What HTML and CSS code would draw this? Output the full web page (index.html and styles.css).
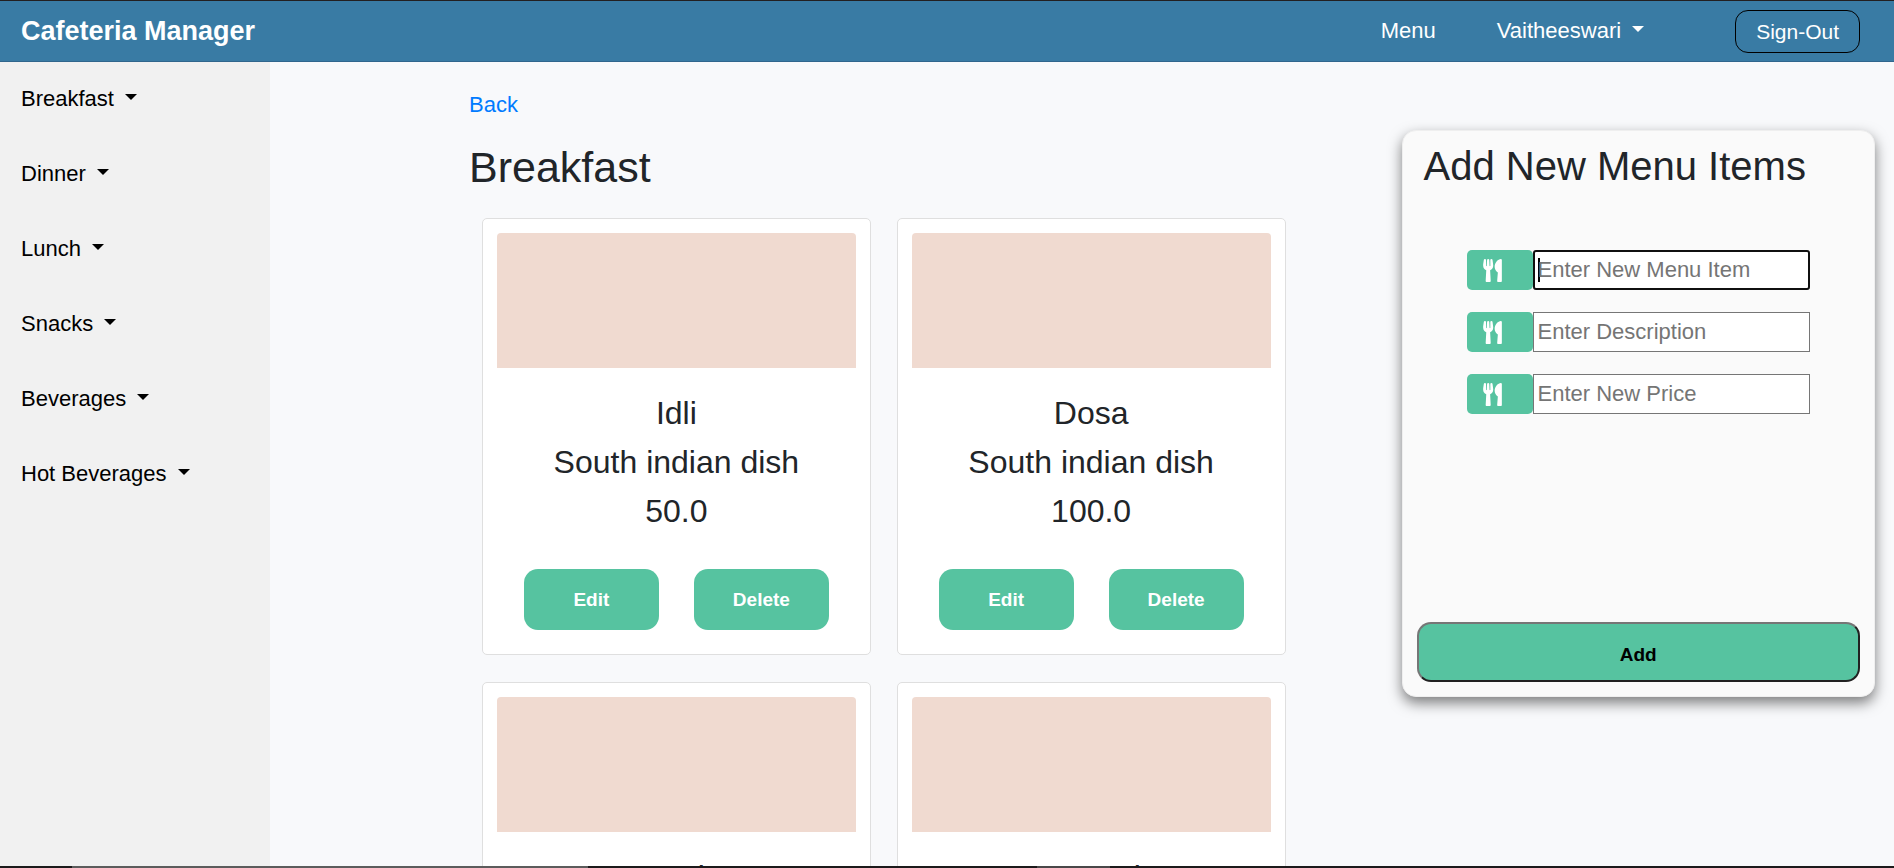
FILE: index.html
```html
<!DOCTYPE html>
<html lang="en">
<head>
<meta charset="utf-8">
<meta name="viewport" content="width=device-width, initial-scale=1">
<title>Cafeteria Manager</title>
<link rel="stylesheet" href="styles.css">
</head>
<body>
<svg class="sprite" aria-hidden="true">
  <symbol id="utensils" viewBox="0 0 416 512">
    <path d="M207.900 15.200c.8 4.700 16.100 94.500 16.100 128.800 0 52.300-27.800 89.600-68.900 104.600L168 486.700c.7 13.700-10.200 25.300-24 25.300H80c-13.700 0-24.700-11.500-24-25.300l12.900-238.100C27.700 233.600 0 196.200 0 144 0 109.600 15.300 19.900 16.100 15.200 19.300-5.100 61.400-5.400 64 16.300v141.200c1.300 3.400 15.100 3.200 16 0 1.400-25.300 7.900-139.200 8-141.800 3.300-20.800 44.700-20.800 47.900 0 .2 2.700 6.600 116.500 8 141.800.9 3.200 14.800 3.400 16 0V16.300c2.600-21.600 44.800-21.400 48-1.100zm119.200 285.700l-15 185.100c-1.200 14 9.900 26 23.900 26h56c13.300 0 24-10.700 24-24V24c0-13.200-10.700-24-24-24-82.500 0-221.400 178.500-64.900 300.900z"/>
  </symbol>
</svg>
<header class="topbar">
  <a class="brand" href="#">Cafeteria Manager</a>
  <nav class="topnav">
    <a class="toplink" href="#">Menu</a>
    <button class="toplink caret" type="button">Vaitheeswari</button>
    <button class="signout" type="button">Sign-Out</button>
  </nav>
</header>
<div class="page">
  <nav class="sidebar">
    <button class="category caret" type="button">Breakfast</button>
    <button class="category caret" type="button">Dinner</button>
    <button class="category caret" type="button">Lunch</button>
    <button class="category caret" type="button">Snacks</button>
    <button class="category caret" type="button">Beverages</button>
    <button class="category caret" type="button">Hot Beverages</button>
  </nav>
  <main class="content">
    <a class="back" href="#">Back</a>
    <h2 class="heading">Breakfast</h2>
    <div class="cards">
      <article class="card">
        <div class="photo"></div>
        <div class="details"><p>Idli</p><p>South indian dish</p><p>50.0</p></div>
        <div class="actions"><button class="action" type="button">Edit</button><button class="action" type="button">Delete</button></div>
      </article>
      <article class="card">
        <div class="photo"></div>
        <div class="details"><p>Dosa</p><p>South indian dish</p><p>100.0</p></div>
        <div class="actions"><button class="action" type="button">Edit</button><button class="action" type="button">Delete</button></div>
      </article>
      <article class="card">
        <div class="photo"></div>
        <div class="details"><p>Puri</p></div>
      </article>
      <article class="card">
        <div class="photo"></div>
        <div class="details"><p>Pongal</p></div>
      </article>
    </div>
  </main>
  <form class="panel">
    <h3 class="panel-title">Add New Menu Items</h3>
    <div class="fields">
      <div class="field">
        <label class="tag" for="item" aria-label="Menu item"><svg class="icon"><use href="#utensils"/></svg></label>
        <input class="input input-active" id="item" type="text" placeholder="Enter New Menu Item">
      </div>
      <div class="field">
        <label class="tag" for="description" aria-label="Description"><svg class="icon"><use href="#utensils"/></svg></label>
        <input class="input" id="description" type="text" placeholder="Enter Description">
      </div>
      <div class="field">
        <label class="tag" for="price" aria-label="Price"><svg class="icon"><use href="#utensils"/></svg></label>
        <input class="input" id="price" type="text" placeholder="Enter New Price">
      </div>
    </div>
    <button class="add" type="button">Add</button>
  </form>
</div>
<div class="edge"></div>
</body>
</html>
```
FILE: styles.css
```css
* { box-sizing: border-box; }

body {
  margin: 0;
  height: 100vh;
  overflow: hidden;
  display: flex;
  flex-direction: column;
  background: #f8f9fb;
  color: #212529;
  font-family: "Liberation Sans", Arial, sans-serif;
  font-size: 22px;
  line-height: 32px;
}

h2, h3, p { margin: 0; font-weight: 400; }
a { text-decoration: none; }
button, input { font: inherit; }

.sprite { display: none; }

.topbar {
  flex: none;
  display: flex;
  justify-content: space-between;
  align-items: center;
  height: 62px;
  padding: 0 34px 0 21px;
  background: #397ba4;
  border-top: 1px solid #231f20;
  border-bottom: 1px solid #30668d;
}

.brand { color: #fff; font-size: 27px; font-weight: 700; }

.topnav { display: flex; align-items: center; }

.toplink {
  margin-right: 61px;
  padding: 0;
  border: 0;
  background: none;
  color: #fff;
}

.signout {
  height: 43px;
  margin-left: 30px;
  padding: 1px 20px 0;
  border: 1px solid #000;
  border-radius: 13px;
  background: none;
  color: #fff;
  font-size: 21px;
}

.caret::after {
  content: "";
  display: inline-block;
  margin-left: 11px;
  vertical-align: 6px;
  border: 6px solid transparent;
  border-top-color: currentColor;
  border-bottom: 0;
}

.page { flex: 1; min-height: 0; display: flex; align-items: flex-start; overflow: hidden; }

.sidebar {
  flex: none;
  align-self: stretch;
  display: flex;
  flex-direction: column;
  align-items: flex-start;
  gap: 43px;
  width: 270px;
  padding: 21px;
  background: #f1f1f1;
}

.category { padding: 0; border: 0; background: none; color: #000; }

.content { flex: 1; padding: 27px 102px 0 199px; }

.back { display: block; width: max-content; color: #007bff; }

.heading { margin: 20px 0 25px; font-size: 43px; line-height: 52px; }

.cards {
  display: grid;
  grid-template-columns: 1fr 1fr;
  gap: 27px 26px;
  padding: 0 14px 0 13px;
}

.card {
  padding: 14px 14px 24px;
  background: #fff;
  border: 1px solid #dfdfdf;
  border-radius: 5px;
}

.photo { height: 135px; background: #f0dad0; border-radius: 4px 4px 0 0; }

.details {
  display: grid;
  gap: 10px;
  padding: 26px 0 38px;
  font-size: 32px;
  line-height: 39px;
  text-align: center;
}

.actions { display: flex; justify-content: center; gap: 35px; }

.action {
  width: 135px;
  height: 61px;
  border: 0;
  border-radius: 14px;
  background: #56c3a0;
  color: #fff;
  font-size: 19px;
  font-weight: 700;
}

.panel {
  flex: none;
  display: flex;
  flex-direction: column;
  width: 25%;
  min-height: 567px;
  margin: 68px 19px 0 0;
  padding: 12px 14px 14px;
  border: 1px solid #efefef;
  border-radius: 14px;
  background: #fafafa;
  box-shadow: 0 6px 14px rgba(0, 0, 0, 0.5);
}

.panel-title { padding-left: 7px; font-size: 40px; line-height: 46px; }

.fields {
  display: grid;
  grid-template-columns: minmax(0, 1fr);
  gap: 22px;
  margin: 61px 50px 0;
}

.field { display: flex; }

.tag {
  flex: none;
  display: flex;
  align-items: center;
  width: 66px;
  height: 40px;
  padding-left: 16px;
  border-radius: 5px;
  background: #56c3a0;
}

.icon { width: 19px; height: 23px; fill: #fff; }

.input {
  flex: 1;
  min-width: 0;
  height: 40px;
  padding: 0 4px;
  border: 1px solid #767676;
  border-radius: 0;
  background: #fff;
  color: #000;
}

.input::placeholder { color: #757575; opacity: 1; }

.input-active {
  padding: 0 3px;
  border: 2px solid #101010;
  border-radius: 3px;
  outline: 0;
  background: #fff linear-gradient(#000, #000) 3px 6px / 2px 24px no-repeat;
}

.add {
  height: 60px;
  margin-top: auto;
  padding: 5px 0 0;
  border: 2px solid;
  border-color: #767676 #212121 #212121 #767676;
  border-radius: 14px;
  background: #56c3a0;
  color: #000;
  font-size: 19px;
  font-weight: 700;
}

.edge {
  flex: none;
  height: 2px;
  background: linear-gradient(90deg, #1c1a1b 72px, #5c5c5c 72px 588px, #1c1a1b 588px 1037px, #4a4849 1037px 1110px, #1c1a1b 1110px);
}
```
